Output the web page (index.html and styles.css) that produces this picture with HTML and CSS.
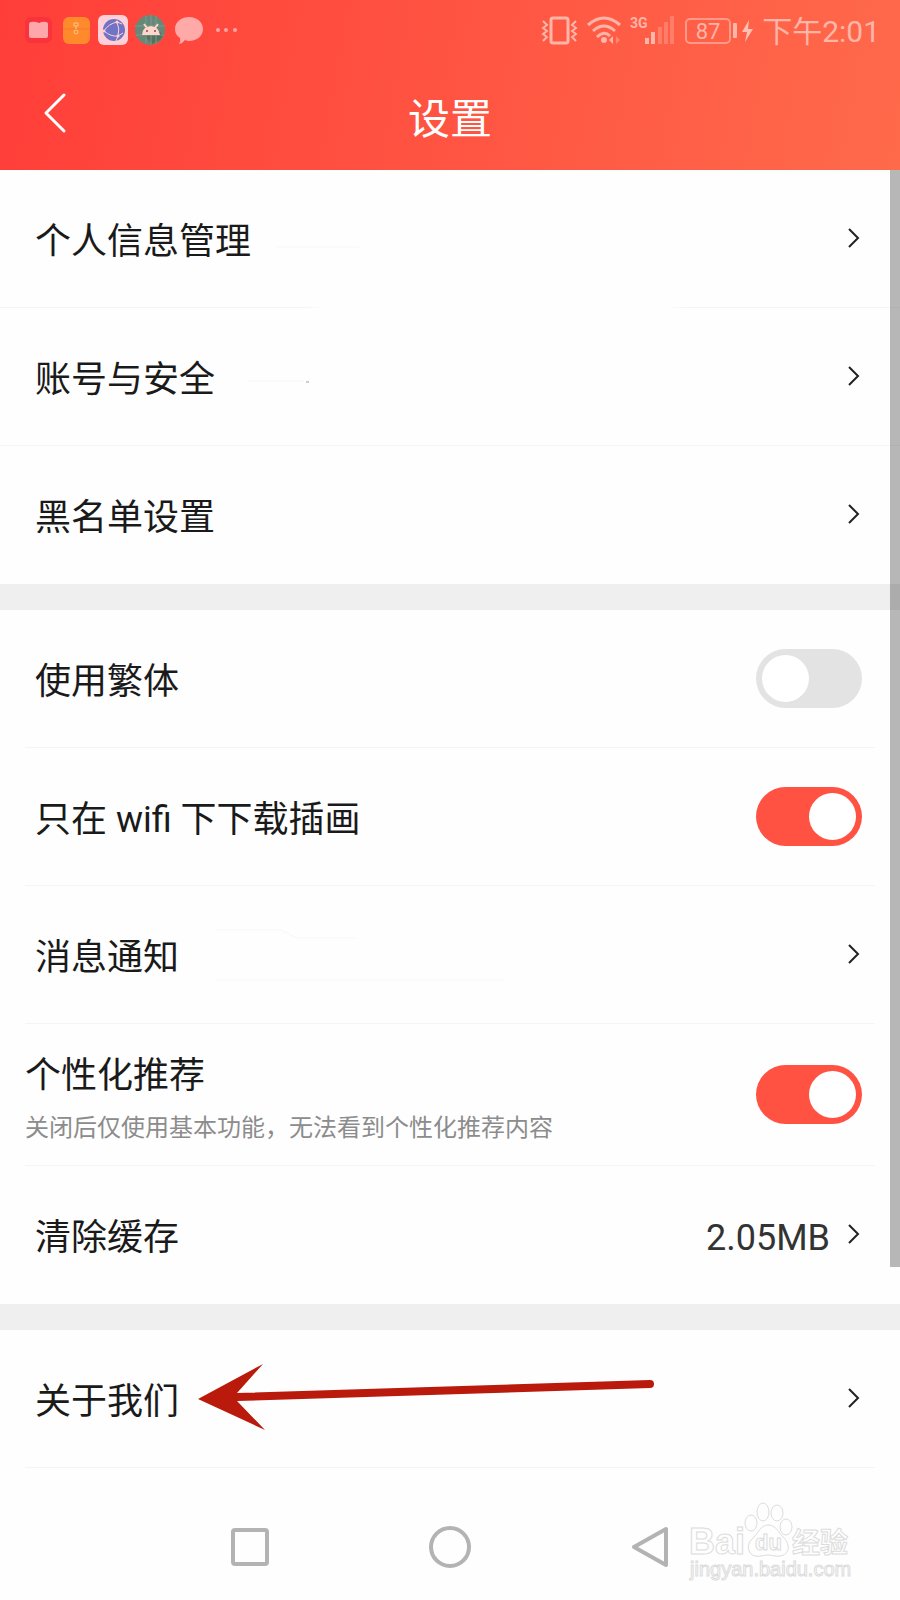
FILE: index.html
```
<!DOCTYPE html>
<html lang="zh-CN">
<head>
    <meta charset="UTF-8">
    <meta name="viewport" content="width=device-width, initial-scale=1.0">
    <title>设置</title>
    <link rel="stylesheet" href="styles.css">
</head>
<body>
    <header class="header">
        <div class="status-bar">
            <div class="status-left">
                <svg width="30" height="30" viewBox="0 0 30 30">
                    <rect x="1" y="2" width="27" height="26" rx="6" fill="#f8333b"/>
                    <path d="M5 9q0-2 2-2 4-1 8 1 4-2 7-1 2 0 2 2v12q0 2-2 2H7q-2 0-2-2z" fill="#ffa6aa"/>
                </svg>
                <svg width="30" height="30" viewBox="0 0 30 30">
                    <rect x="2" y="2" width="27" height="27" rx="6" fill="#ff8a2c"/>
                    <path d="M2 14h27" stroke="#f27a2c"/>
                    <g fill="none" stroke="#ffc48a" stroke-width="1">
                        <path d="M13 8h4v3h-4zM15 11v3"/>
                        <circle cx="15" cy="17" r="2"/>
                    </g>
                </svg>
                <svg width="30" height="30" viewBox="0 0 30 30">
                    <rect width="30" height="30" rx="6" fill="#ffd0d8"/>
                    <circle cx="16" cy="15" r="11" fill="#7174c4"/>
                    <g fill="none" stroke="#ffd0d8" stroke-width="1">
                        <path d="M19 7Q10 9 6 16q7 6 14 5 2-7-1-14M20 21l-2 5M19 7l5 2M20 21l5-3"/>
                    </g>
                    <g fill="#ffd0d8">
                        <circle cx="19" cy="7" r="1.5"/><circle cx="6" cy="16" r="1.5"/><circle cx="20" cy="21" r="1.5"/>
                    </g>
                </svg>
                <svg width="30" height="30" viewBox="0 0 30 30">
                    <circle cx="15" cy="15" r="15" fill="#678778"/>
                    <path d="M9 20l8 9 8-4 3-5-3-3z" fill="#54705f"/>
                    <path d="M11 1v28M16 0v30M21 1v28M0 11h30M1 20h28" stroke="#7f9a89" stroke-width="1"/>
                    <path d="M7 20q0-8 9-9 8 1 9 9z" fill="#ffd6cc"/>
                    <path d="M9 9l3 4M23 9l-3 4" stroke="#ffd6cc" stroke-width="2"/>
                    <circle cx="12" cy="16" r="1" fill="#8a4a44"/><circle cx="20" cy="16" r="1" fill="#8a4a44"/>
                </svg>
                <svg width="30" height="30" viewBox="0 0 30 30">
                    <path d="M17 2c8 0 14 5 14 12s-6 12-14 12q-2 0-4-1-2 3-6 4 2-3 1-6-5-3-5-9C3 7 9 2 17 2z" fill="#ffa9a9"/>
                </svg>
                <svg width="30" height="30" viewBox="0 0 30 30" fill="#ffa6a3">
                    <circle cx="9" cy="15" r="2"/><circle cx="17" cy="15" r="2"/><circle cx="26" cy="15" r="2"/>
                </svg>
            </div>
            <div class="status-right">
                <svg width="36" height="30" viewBox="0 0 36 30" fill="none" stroke="#ffb5a8" stroke-width="2">
                    <rect x="9" y="3" width="17" height="25" rx="2" stroke-width="3"/>
                    <path d="M1 6l4 4-4 3 4 3-4 3 4 3-4 4M34 6l-4 4 4 3-4 3 4 3-4 3 4 4"/>
                </svg>
                <svg width="34" height="30" viewBox="0 0 34 30">
                    <g fill="none" stroke="#ffb5a8" stroke-width="3">
                        <path d="M1 10q16-14 32 0M6 16q11-10 22 0M10 22q7-7 13-1"/>
                    </g>
                    <circle cx="17" cy="25" r="3" fill="#ffb5a8"/>
                    <path d="M26 21v8l-4-4z" fill="#ffb5a8"/><path d="M29 21v8l4-4z" fill="#ff8371"/>
                </svg>
                <svg width="46" height="30" viewBox="0 0 46 30">
                    <text x="0" y="13" class="network">3G</text>
                    <g fill="#ffb5a8"><rect x="15" y="23" width="4" height="6"/><rect x="21" y="17" width="4" height="12"/></g>
                    <g fill="#ff7d69"><rect x="28" y="12" width="4" height="17"/><rect x="34" y="7" width="4" height="22"/><rect x="40" y="1" width="4" height="28"/></g>
                </svg>
                <svg width="68" height="30" viewBox="0 0 68 30">
                    <rect x="1" y="4" width="44" height="24" rx="4" fill="none" stroke="#ff9a88" stroke-width="2"/>
                    <rect x="48" y="8" width="4" height="15" rx="1" fill="#ffb5a8"/>
                    <text x="23" y="24" text-anchor="middle" class="battery">87</text>
                    <path d="M64 5l-7 12h5l-2 10 8-13h-5z" fill="#ffc0b4"/>
                </svg>
                <span class="time">下午2:01</span>
            </div>
        </div>
        <div class="title-bar">
            <a class="back" href="#" aria-label="返回">
                <svg width="24" height="42" viewBox="0 0 24 42" fill="none" stroke="#fff" stroke-width="3" stroke-linecap="round" stroke-linejoin="round">
                    <path d="M20 1L2 19l18 18"/>
                </svg>
            </a>
            <h1>设置</h1>
        </div>
    </header>

    <main class="settings">
        <section class="group group-wide">
            <a class="row row-faded" href="#">
                <span class="label">个人信息管理</span>
                <svg class="trace" width="90" height="20" viewBox="0 0 90 20"><path d="M0 18h84"/></svg>
                <svg class="chevron" width="15" height="22" viewBox="0 0 15 22"><path d="M2 1l9 9-9 9"/></svg>
            </a>
            <a class="row" href="#">
                <span class="label">账号与安全</span>
                <svg class="trace" width="90" height="20" viewBox="0 0 90 20"><path d="M8 14h56"/><path d="M67 15h3" stroke="#a99"/></svg>
                <svg class="chevron" width="15" height="22" viewBox="0 0 15 22"><path d="M2 1l9 9-9 9"/></svg>
            </a>
            <a class="row" href="#">
                <span class="label">黑名单设置</span>
                <svg class="chevron" width="15" height="22" viewBox="0 0 15 22"><path d="M2 1l9 9-9 9"/></svg>
            </a>
        </section>

        <section class="group">
            <label class="row">
                <span class="label">使用繁体</span>
                <input class="switch" type="checkbox">
            </label>
            <label class="row">
                <span class="label">只在 wifi 下下载插画</span>
                <input class="switch" type="checkbox" checked>
            </label>
            <a class="row" href="#">
                <span class="label">消息通知</span>
                <svg class="trace" width="310" height="60" viewBox="0 0 310 60"><path d="M12 5h66l16 8h60M12 55h290"/></svg>
                <svg class="chevron" width="15" height="22" viewBox="0 0 15 22"><path d="M2 1l9 9-9 9"/></svg>
            </a>
            <label class="row row-detail">
                <span class="detail">
                    <span>个性化推荐</span>
                    <small>关闭后仅使用基本功能，无法看到个性化推荐内容</small>
                </span>
                <input class="switch" type="checkbox" checked>
            </label>
            <a class="row" href="#">
                <span class="label">清除缓存</span>
                <span class="label value">2.05MB</span>
                <svg class="chevron" width="15" height="22" viewBox="0 0 15 22"><path d="M2 1l9 9-9 9"/></svg>
            </a>
        </section>

        <section class="group">
            <a class="row" href="#">
                <span class="label">关于我们</span>
                <svg class="arrow" width="456" height="68" viewBox="0 0 456 68">
                    <path d="M0 34L65 -1 39 28 452 15a4 4 0 0 1 0 8L39 36l28 29z" fill="#b91a0b"/>
                </svg>
                <svg class="chevron" width="15" height="22" viewBox="0 0 15 22"><path d="M2 1l9 9-9 9"/></svg>
            </a>
        </section>
        <div class="scrollbar"></div>
    </main>

    <nav class="nav">
        <button type="button" aria-label="最近任务">
            <svg width="44" height="44" viewBox="0 0 44 44"><rect x="5" y="5" width="34" height="34" rx="2"/></svg>
        </button>
        <button type="button" aria-label="主屏幕">
            <svg width="44" height="44" viewBox="0 0 44 44"><circle cx="22" cy="22" r="19"/></svg>
        </button>
        <button type="button" aria-label="返回">
            <svg width="44" height="44" viewBox="0 0 44 44"><path d="M6 22L38 4v36z"/></svg>
        </button>
        <svg class="watermark" width="164" height="84" viewBox="0 0 164 84">
            <text x="0" y="52" class="wm-bai">Bai</text>
            <ellipse cx="62" cy="21" rx="6" ry="8"/>
            <ellipse cx="74" cy="10" rx="6" ry="9"/>
            <ellipse cx="88" cy="11" rx="6" ry="8"/>
            <ellipse cx="97" cy="25" rx="6" ry="8"/>
            <path d="M79 23c8 0 10 7 16 13 7 7 5 17-4 18-5 1-8-1-12-1s-8 2-13 1c-8-2-9-12-2-18 6-6 8-13 15-13z"/>
            <text x="66" y="48" class="wm-du">du</text>
            <text x="103" y="51" class="wm-cn">经验</text>
            <text x="1" y="74" class="wm-url">jingyan.baidu.com</text>
        </svg>
    </nav>
</body>
</html>
```
FILE: styles.css
```
* {
    box-sizing: border-box;
}
body {
    font-family: Roboto, "Noto Sans CJK SC", sans-serif;
    margin: 0;
    min-height: 100vh;
    display: flex;
    flex-direction: column;
    background-color: #fefefe;
    color: #1a1a1a;
}
svg {
    display: block;
    flex-shrink: 0;
    overflow: visible;
}
a {
    color: inherit;
    text-decoration: none;
}

/* Header */
.header {
    background: linear-gradient(100deg, #ff3e39, #ff6a4b);
    color: #fff;
}
.status-bar {
    height: 60px;
    padding: 0 20px 0 24px;
    display: flex;
    justify-content: space-between;
    align-items: center;
}
.status-left,
.status-right {
    display: flex;
    align-items: center;
    gap: 7px;
}
.status-right {
    gap: 9px;
}
.network,
.battery {
    font-family: Roboto, sans-serif;
    fill: #ffb5a8;
}
.network {
    font-size: 14px;
    font-weight: bold;
}
.battery {
    font-size: 22px;
}
.time {
    padding-top: 4px;
    font-size: 30px;
    line-height: 30px;
    color: #ffb5a8;
}
.title-bar {
    height: 110px;
    padding: 0 44px;
    display: grid;
    grid-template-columns: 1fr auto 1fr;
    align-items: center;
}
.title-bar h1 {
    margin: 0;
    font-size: 42px;
    font-weight: 400;
}

/* Settings list */
.settings {
    position: relative;
}
.group + .group {
    border-top: 26px solid #efefef;
}
.row {
    min-height: 138px;
    margin: 0 25px;
    padding: 0 13px 0 10px;
    display: flex;
    align-items: center;
    border-bottom: 1px solid #f5f5f5;
    font-size: 36px;
    line-height: 52px;
}
.group-wide .row {
    margin: 0;
    padding: 0 38px 0 35px;
}
.group:not(:nth-child(3)) .row:last-child {
    border-bottom-color: transparent;
}
.row-faded {
    border-image: linear-gradient(to right, #f5f5f5 34%, #fefefe 36%, #fefefe 74%, #f5f5f5 76%) 1;
}
.row-detail {
    min-height: 142px;
    padding-left: 0;
}
.label {
    padding-top: 6px;
}
.detail {
    padding-top: 14px;
    display: flex;
    flex-direction: column;
}
.detail small {
    font-size: 24px;
    color: #8c8c8c;
}
.trace {
    margin-left: 24px;
    fill: none;
    stroke: #f7f7f7;
}
.chevron {
    margin-left: auto;
    fill: none;
    stroke: #222;
    stroke-width: 2;
}
.value {
    margin-left: auto;
    color: #333;
}
.value + .chevron {
    margin-left: 17px;
}
.arrow {
    margin-left: 19px;
}
.switch {
    appearance: none;
    flex-shrink: 0;
    width: 106px;
    height: 59px;
    margin: 0 0 0 auto;
    padding: 6px;
    border-radius: 30px;
    background-color: #e3e3e3;
}
.switch::before {
    content: "";
    display: block;
    width: 47px;
    height: 47px;
    border-radius: 50%;
    background-color: #fff;
}
.switch:checked {
    background-color: #ff5242;
}
.switch:checked::before {
    margin-left: 47px;
}
.scrollbar {
    position: absolute;
    top: 0;
    right: 0;
    width: 10px;
    height: 84.5%;
    background-color: rgba(0, 0, 0, 0.28);
}

/* Navigation bar */
.nav {
    position: relative;
    flex: 1;
    padding: 26px 150px 0;
    display: grid;
    grid-template-columns: repeat(3, 1fr);
    justify-items: center;
    align-items: center;
}
.nav button {
    border: none;
    padding: 0;
    background: none;
}
.nav button svg {
    fill: none;
    stroke: #b3b3b3;
    stroke-width: 4;
    stroke-linejoin: round;
}
.watermark {
    position: absolute;
    right: 47px;
    bottom: 14px;
    fill: #fefefe;
    stroke: #dcdcdc;
    stroke-width: 1;
    font-family: "Liberation Sans", "Noto Sans CJK SC", sans-serif;
}
.wm-bai {
    font-size: 36px;
    font-weight: bold;
}
.wm-du {
    font-size: 22px;
    font-weight: bold;
}
.wm-cn {
    font-size: 28px;
    font-weight: bold;
}
.wm-url {
    font-size: 20px;
}
```
